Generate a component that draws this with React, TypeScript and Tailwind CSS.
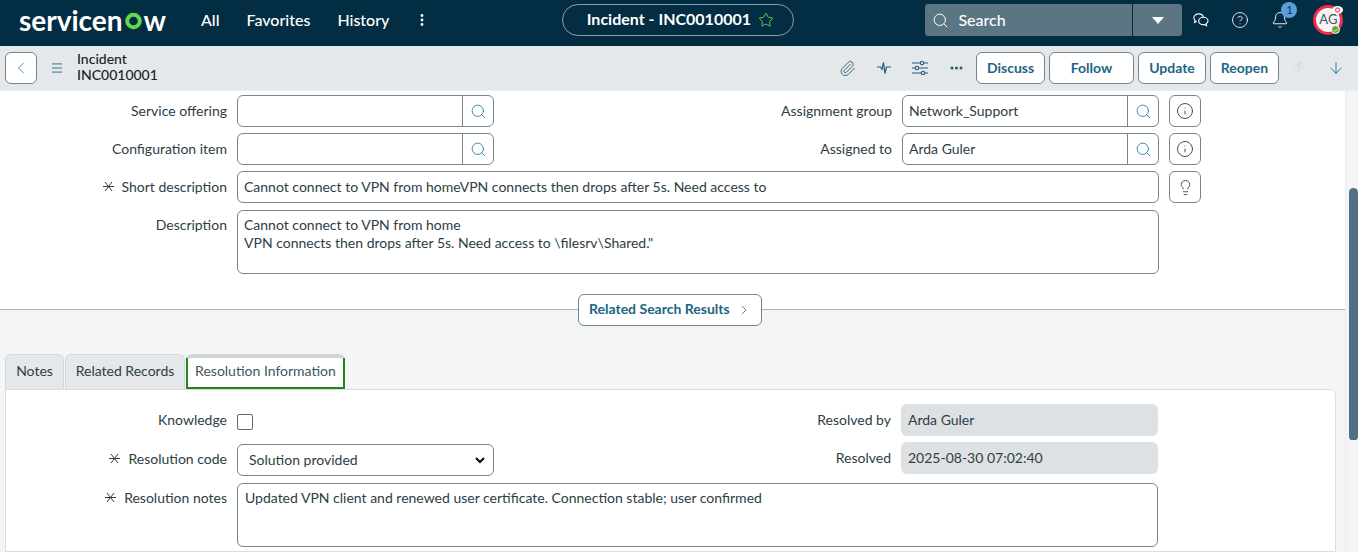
import { FC, ReactNode } from "react";
import { ArrowDown, ArrowUp, Bell, Check, ChevronLeft, ChevronRight, CircleHelp, Info, Lightbulb, Menu, Paperclip, Search, Star } from "lucide-react";

const Required = () => (
    <svg width="11" height="11" viewBox="0 0 11 11" className="mr-[8px] shrink-0 text-[#2e3d45]" stroke="currentColor" strokeWidth="1">
        <path d="M0 5.5h11M2 1l7 9M9 1l-7 9" />
    </svg>
);

const Label: FC<{ text: string; required?: boolean; width?: string }> = ({ text, required, width = "w-[227px]" }) => (
    <div className={`${width} shrink-0 flex items-center justify-end pb-[2px] text-[14px] text-[#2e3d45]`}>
        {required && <Required />}
        <span>{text}</span>
    </div>
);

const boxClass = "rounded-[6px] border border-[#76858d] bg-white text-[14px] text-[#2e3d45]";

const LookupInput: FC<{ value?: string }> = ({ value }) => (
    <div className={`${boxClass} w-[257px] h-[32px] flex`}>
        <div className="flex-1 px-[6px] pb-[2px] flex items-center">{value}</div>
        <div className="w-[31px] border-l border-[#76858d] flex items-center justify-center">
            <Search size={17} strokeWidth={1.2} className="text-[#1c7bab]" />
        </div>
    </div>
);

const IconBox: FC<{ children: ReactNode }> = ({ children }) => (
    <div className={`${boxClass} w-[32px] h-[32px] flex items-center justify-center text-[#1c7bab]`}>{children}</div>
);

const ActionButton: FC<{ text: string; width: string }> = ({ text, width }) => (
    <div className={`${width} h-[32px] rounded-[6px] border border-[#76858d] bg-white flex items-center justify-center pb-[2px] text-[14px] font-bold text-[#1c6584]`}>
        {text}
    </div>
);

const LookupRow: FC<{ left: string; right: string; value: string }> = ({ left, right, value }) => (
    <div className="flex h-[32px] items-center">
        <Label text={left} />
        <div className="ml-[10px] w-[428px]">
            <LookupInput />
        </div>
        <Label text={right} />
        <div className="ml-[10px]">
            <LookupInput value={value} />
        </div>
        <div className="ml-[10px]">
            <IconBox>
                <Info size={18} strokeWidth={1.2} />
            </IconBox>
        </div>
    </div>
);

const Logo = () => (
    <div className="w-[182px] flex items-baseline text-[28px] leading-none font-bold text-white">
        <span>servicen</span>
        <svg width="19" height="19" viewBox="0 0 19 19" className="mx-[1px] self-center mt-[3px]">
            <circle cx="9.5" cy="9" r="6.3" fill="none" stroke="#62d84e" strokeWidth="4" />
            <path d="M6 14.5l3.5 3 3.5-3z" fill="#62d84e" />
        </svg>
        <span>w</span>
    </div>
);

const TopBar = () => (
    <div className="h-[46px] bg-[#032d42] flex items-center pl-[19px] pb-[6px] text-white shrink-0">
        <Logo />
        <div className="flex items-center gap-[27px] pb-[1px] text-[16px] font-medium">
            <span>All</span>
            <span>Favorites</span>
            <span>History</span>
        </div>
        <svg width="4" height="14" viewBox="0 0 4 14" className="ml-[31px]" fill="currentColor">
            <circle cx="2" cy="2.5" r="1.4" />
            <circle cx="2" cy="7" r="1.4" />
            <circle cx="2" cy="11.5" r="1.4" />
        </svg>
        <div className="ml-[138px] w-[232px] h-[32px] rounded-full border border-[#8b9da7] flex items-center justify-center gap-[7px] pl-[4px] text-[16px] font-bold">
            <span className="pb-[2px]">Incident - INC0010001</span>
            <Star size={16} strokeWidth={1.4} className="text-[#62d84e]" />
        </div>
        <div className="ml-[131px] w-[257px] h-[32px] rounded-[3px] bg-[#5b7583] flex">
            <div className="flex-1 flex items-center pl-[7px] gap-[9px] text-[16px] font-medium">
                <Search size={17} strokeWidth={1.4} />
                <span>Search</span>
            </div>
            <div className="w-[50px] border-l border-[#032d42] flex items-center justify-center">
                <div className="w-0 h-0 border-x-[6px] border-x-transparent border-t-[7px] border-t-white" />
            </div>
        </div>
        <svg width="16" height="14" viewBox="0 0 17 15" className="ml-[11px]" fill="none" stroke="currentColor" strokeWidth="1.2">
            <path d="M6 1C3 1 .8 2.9.8 5.1c0 1.1.5 2 1.3 2.7L1.6 10l2.3-1.2" />
            <path d="M6 1c2.6 0 4.6 1.4 5 3.4" />
            <path d="M11 4.6c-2.8 0-5 1.7-5 3.9s2.2 3.9 5 3.9l.9-.1 2.6 1.4-.5-2.4c1.2-.7 2-1.7 2-2.8 0-2.2-2.2-3.9-5-3.9z" />
        </svg>
        <CircleHelp size={18} strokeWidth={1.1} className="ml-[22px]" />
        <div className="relative ml-[22px]">
            <Bell size={18} strokeWidth={1.2} />
            <div className="absolute -top-[9px] left-[10px] w-[16px] h-[16px] rounded-full bg-[#5aa0d8] flex items-center justify-center text-[12px] text-[#0b3550]">1</div>
        </div>
        <div className="relative ml-[24px] w-[30px] h-[30px] rounded-full border-[3px] border-[#ee2b48] bg-[#f4f4f4] flex items-center justify-center text-[13px] text-[#3e5663]">
            AG
            <svg width="11" height="8" viewBox="0 0 11 8" className="absolute -top-[2px] -right-[3px]">
                <ellipse cx="5.5" cy="4" rx="5.5" ry="4" fill="#fff" />
                <circle cx="5.5" cy="4" r="2" fill="none" stroke="#e56a80" strokeWidth="1.3" />
            </svg>
            <div className="absolute -bottom-[2px] right-[0px] w-[9px] h-[9px] rounded-full bg-[#62a82c] border border-white flex items-center justify-center">
                <Check size={6} strokeWidth={3} className="text-white" />
            </div>
        </div>
    </div>
);

const SubBar = () => (
    <div className="h-[45px] bg-[#e4e8ea] flex items-center pl-[5px] shrink-0 border-b border-[#eceff0]">
        <div className="w-[32px] h-[32px] rounded-[6px] border border-[#76858d] bg-white flex items-center justify-center">
            <ChevronLeft size={20} strokeWidth={1} className="text-[#1c7bab]" />
        </div>
        <Menu size={14} strokeWidth={1.4} className="ml-[13px] text-[#0f5a78]" />
        <div className="ml-[13px] mb-[2px] text-[14px] leading-[16px] font-medium text-[#16242c]">
            <div>Incident</div>
            <div>INC0010001</div>
        </div>
        <div className="ml-auto flex items-center pr-[13px]">
            <Paperclip size={17} strokeWidth={1.3} className="text-[#2d5e74] mr-[21px]" />
            <svg width="14" height="14" viewBox="0 0 14 14" className="text-[#1f5e78] mr-[21px]" fill="none" stroke="currentColor" strokeWidth="1.2">
                <path d="M0 6h3.5L5 8.5 6.5 1.5 8 12.5 9.5 6H14" />
            </svg>
            <svg width="16" height="14" viewBox="0 0 16 14" className="text-[#1f5e78] mr-[22px]" fill="none" stroke="currentColor" strokeWidth="1.1">
                <path d="M0 2h8M12 2h4M0 7h3M7 7h9M0 12h9M13 12h3" />
                <circle cx="10" cy="2" r="1.7" />
                <circle cx="5" cy="7" r="1.7" />
                <circle cx="11" cy="12" r="1.7" />
            </svg>
            <svg width="13" height="4" viewBox="0 0 13 4" className="text-[#1f5e78] mr-[13px]" fill="currentColor">
                <circle cx="2" cy="2" r="1.5" />
                <circle cx="6.5" cy="2" r="1.5" />
                <circle cx="11" cy="2" r="1.5" />
            </svg>
            <div className="flex gap-[4px]">
                <ActionButton text="Discuss" width="w-[69px]" />
                <ActionButton text="Follow" width="w-[85px]" />
                <ActionButton text="Update" width="w-[68px]" />
                <ActionButton text="Reopen" width="w-[69px]" />
            </div>
            <ArrowUp size={18} strokeWidth={1.1} className="ml-[11px] text-[#c5d3d9]" />
            <ArrowDown size={18} strokeWidth={1.2} className="ml-[19px] text-[#1c6f92]" />
        </div>
    </div>
);

const FormTop = () => (
    <div className="bg-white h-[218px] pt-[4px] flex flex-col gap-[6px] shrink-0">
        <LookupRow left="Service offering" right="Assignment group" value="Network_Support" />
        <LookupRow left="Configuration item" right="Assigned to" value="Arda Guler" />
        <div className="flex h-[32px]">
            <Label text="Short description" required />
            <div className={`${boxClass} ml-[10px] w-[922px] flex items-center px-[6px] pb-[2px]`}>
                Cannot connect to VPN from homeVPN connects then drops after 5s. Need access to
            </div>
            <div className="ml-[10px]">
                <IconBox>
                    <Lightbulb size={17} strokeWidth={1.2} />
                </IconBox>
            </div>
        </div>
        <div className="flex mt-[1px]">
            <div className="pt-[4px] h-[64px]">
                <Label text="Description" />
            </div>
            <div className={`${boxClass} ml-[10px] w-[922px] h-[64px] px-[6px] py-[5px] leading-[18px]`}>
                <div>Cannot connect to VPN from home</div>
                <div>VPN connects then drops after 5s. Need access to \filesrv\Shared."</div>
            </div>
        </div>
    </div>
);

const Divider = () => (
    <div className="relative shrink-0 h-0 border-t border-[#a9b3b9]">
        <div className="absolute left-[578px] -top-[16px] w-[184px] h-[32px] rounded-[6px] border border-[#76858d] bg-white flex items-center pl-[10px] gap-[6px] text-[14px] font-bold text-[#1c6584]">
            <span className="pb-[3px]">Related Search Results</span>
            <ChevronRight size={16} strokeWidth={1.1} className="text-[#2d5e74]" />
        </div>
    </div>
);

const Tabs = () => (
    <div className="flex ml-[5px] gap-[1px] h-[35px] mt-[44px] shrink-0 text-[14px] text-[#2e3d45]">
        <div className="w-[59px] rounded-t-[6px] bg-[#e4e8ea] border border-b-0 border-[#d3d8db] flex items-center justify-center pb-[4px]">Notes</div>
        <div className="w-[120px] rounded-t-[6px] bg-[#e4e8ea] border border-b-0 border-[#d3d8db] flex items-center justify-center pb-[4px]">Related Records</div>
        <div className="w-[159px] rounded-t-[6px] border-t-[4px] border-[#cfd5d8] bg-white">
            <div className="h-[31px] border-x-2 border-b-2 border-[#23851c] flex items-center justify-center pb-[5px] text-[#3f5560]">Resolution Information</div>
        </div>
    </div>
);

const ReadOnly: FC<{ value: string }> = ({ value }) => (
    <div className="w-[257px] h-[32px] rounded-[6px] bg-[#dee1e3] flex items-center px-[7px] pb-[2px] text-[14px] text-[#2e3d45]">{value}</div>
);

const ResolutionPanel = () => (
    <div className="w-[1331px] ml-[5px] flex-1 bg-white border border-[#d9dde0] rounded-tr-[6px] pt-[14px]">
        <div className="flex">
            <div className="w-[659px] shrink-0">
                <div className="flex h-[32px] mt-[1px] items-center">
                    <div className="mb-[2px]">
                        <Label text="Knowledge" width="w-[221px]" />
                    </div>
                    <div className="ml-[10px] w-[16px] h-[16px] mt-[2px] rounded-[2px] border border-[#5e6d75]" />
                </div>
                <div className="flex h-[32px] mt-[7px]">
                    <div className="flex pb-[2px]">
                        <Label text="Resolution code" required width="w-[221px]" />
                    </div>
                    <div className={`${boxClass} ml-[10px] w-[257px] flex items-center justify-between pl-[11px] pr-[8px]`}>
                        <span className="pb-[2px]">Solution provided</span>
                        <svg width="10" height="7" viewBox="0 0 10 7" fill="none" stroke="#111" strokeWidth="2.2">
                            <path d="M1 1l4 4 4-4" />
                        </svg>
                    </div>
                </div>
            </div>
            <div className="flex flex-col gap-[6px]">
                <div className="flex h-[32px]">
                    <Label text="Resolved by" width="w-[226px]" />
                    <div className="ml-[10px]">
                        <ReadOnly value="Arda Guler" />
                    </div>
                </div>
                <div className="flex h-[32px]">
                    <Label text="Resolved" width="w-[226px]" />
                    <div className="ml-[10px]">
                        <ReadOnly value="2025-08-30 07:02:40" />
                    </div>
                </div>
            </div>
        </div>
        <div className="flex mt-[7px]">
            <div className="pt-[4px] h-[64px]">
                <Label text="Resolution notes" required width="w-[221px]" />
            </div>
            <div className={`${boxClass} ml-[10px] w-[921px] h-[64px] px-[7px] py-[5px] leading-[18px]`}>
                Updated VPN client and renewed user certificate. Connection stable; user confirmed
            </div>
        </div>
    </div>
);

const App = () => {
    return (
        <div className="w-[1358px] h-[552px] overflow-hidden flex flex-col font-['Lato',sans-serif]">
            <TopBar />
            <SubBar />
            <div className="flex flex-1 min-h-0">
                <div className="flex-1 flex flex-col min-w-0 bg-[#f4f5f7] overflow-hidden">
                    <FormTop />
                    <Divider />
                    <Tabs />
                    <ResolutionPanel />
                </div>
                <div className="w-[13px] shrink-0 bg-[#f3f4f6] border-l border-[#e9ebed] pl-[3px] pt-[97px]">
                    <div className="w-[9px] h-[252px] rounded-t-[5px] rounded-b-[4px] bg-[#527083]" />
                </div>
            </div>
        </div>
    );
};

export default App;
